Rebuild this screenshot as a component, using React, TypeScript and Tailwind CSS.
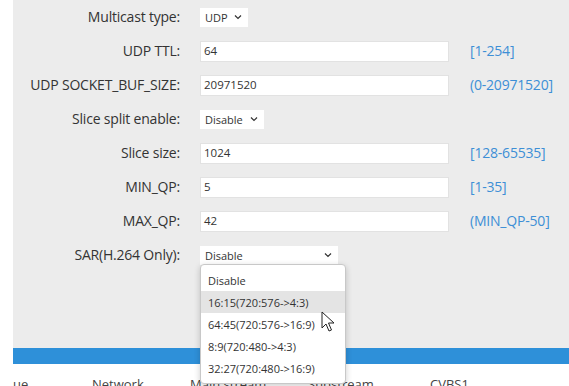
import React from "react";

const Chevron = () => (
  <svg width="8" height="6" viewBox="0 0 8 6" className="shrink-0">
    <path d="M1 1.5 L4 4.5 L7 1.5" fill="none" stroke="#333" strokeWidth="1.2" />
  </svg>
);

type Row = { label: string; kind: "select" | "input"; value: string; hint?: string; w?: string };

const rows: Row[] = [
  { label: "Multicast type:", kind: "select", value: "UDP", w: "w-[48px]" },
  { label: "UDP TTL:", kind: "input", value: "64", hint: "[1-254]" },
  { label: "UDP SOCKET_BUF_SIZE:", kind: "input", value: "20971520", hint: "(0-20971520]" },
  { label: "Slice split enable:", kind: "select", value: "Disable", w: "w-[64px]" },
  { label: "Slice size:", kind: "input", value: "1024", hint: "[128-65535]" },
  { label: "MIN_QP:", kind: "input", value: "5", hint: "[1-35]" },
  { label: "MAX_QP:", kind: "input", value: "42", hint: "(MIN_QP-50]" },
  { label: "SAR(H.264 Only):", kind: "select", value: "Disable", w: "w-[138px]" },
];

const options = [
  "Disable",
  "16:15(720:576->4:3)",
  "64:45(720:576->16:9)",
  "8:9(720:480->4:3)",
  "32:27(720:480->16:9)",
];

export default function App() {
  return (
    <div
      className="relative w-[569px] h-[386px] overflow-hidden bg-white text-[#333]"
      style={{ fontFamily: '"Open Sans", "Noto Sans", sans-serif' }}
    >
      <div className="ml-[13px] h-[348px] bg-[#ececec]">
        {rows.map((r) => (
          <div key={r.label} className="flex h-[34px] items-center">
            <div className="w-[167px] shrink-0 text-right text-[14px] leading-none tracking-[-0.2px]">{r.label}</div>
            <div className="ml-[20px] w-[249px] shrink-0">
              {r.kind === "input" ? (
                <div className="flex h-[21px] w-[249px] items-center border border-[#e2e2e2] bg-white pl-[3px] text-[11.5px] leading-none">
                  {r.value}
                </div>
              ) : (
                <div
                  className={`flex h-[19px] items-center justify-between bg-white pl-[5px] pr-[6px] text-[11px] leading-none ${r.w}`}
                >
                  <span>{r.value}</span>
                  <Chevron />
                </div>
              )}
            </div>
            {r.hint && (
              <div className="ml-[21px] text-[14px] leading-none tracking-[-0.2px] text-[#3d8fd6]">{r.hint}</div>
            )}
          </div>
        ))}
      </div>
      <div className="ml-[13px] h-[16px] bg-[#2e90d9]" />
      <div className="flex h-[22px] items-start pt-[14px] text-[13px] leading-none font-medium text-[#444]">
        <div className="w-[92px] pl-[13px]">ue</div>
        <div className="w-[98px]">Network</div>
        <div className="w-[118px]">Main stream</div>
        <div className="w-[122px]">Substream</div>
        <div>CVBS1</div>
      </div>

      <div className="absolute left-[200px] top-[264px] w-[146px] rounded-[4px] border border-[#c8c8c8] bg-white py-[4px] text-[11px] leading-none shadow-[0_2px_6px_rgba(0,0,0,0.2)]">
        {options.map((o, i) => (
          <div
            key={o}
            className={`flex h-[22px] items-center pl-[7px] ${i === 1 ? "bg-[#e4e4e4]" : ""}`}
          >
            {o}
          </div>
        ))}
      </div>

      <svg className="absolute left-[321px] top-[311px]" width="16" height="22" viewBox="0 0 16 22">
        <path
          d="M1 1 L1 17 L5 13 L8 20 L10.5 19 L7.5 12 L13 12 Z"
          fill="white"
          stroke="#222"
          strokeWidth="1"
          strokeLinejoin="round"
        />
      </svg>
    </div>
  );
}
